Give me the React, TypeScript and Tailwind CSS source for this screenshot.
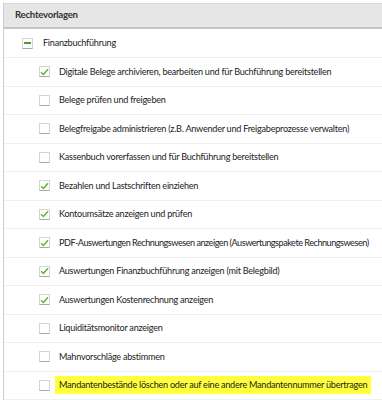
import React from 'react';

const rows: { label: string; checked: boolean; highlight?: boolean; tight?: boolean }[] = [
  { label: 'Digitale Belege archivieren, bearbeiten und für Buchführung bereitstellen', checked: true },
  { label: 'Belege prüfen und freigeben', checked: false },
  { label: 'Belegfreigabe administrieren (z.B. Anwender und Freigabeprozesse verwalten)', checked: false },
  { label: 'Kassenbuch vorerfassen und für Buchführung bereitstellen', checked: false },
  { label: 'Bezahlen und Lastschriften einziehen', checked: true },
  { label: 'Kontoumsätze anzeigen und prüfen', checked: true },
  { label: 'PDF-Auswertungen Rechnungswesen anzeigen (Auswertungspakete Rechnungswesen)', checked: true, tight: true },
  { label: 'Auswertungen Finanzbuchführung anzeigen (mit Belegbild)', checked: true },
  { label: 'Auswertungen Kostenrechnung anzeigen', checked: true },
  { label: 'Liquiditätsmonitor anzeigen', checked: false },
  { label: 'Mahnvorschläge abstimmen', checked: false },
  { label: 'Mandantenbestände löschen oder auf eine andere Mandantennummer übertragen', checked: false, highlight: true },
];

const Box = ({ checked, minus }: { checked?: boolean; minus?: boolean }) => (
  <span className="w-[11px] h-[11px] shrink-0 bg-white border border-[#d4d4d4] border-b-[#a9a9a9] rounded-[1px] flex items-center justify-center">
    {checked && (
      <svg width="9" height="8" viewBox="0 0 9 8">
        <path d="M1 4.2 L3.4 6.4 L8 1.2" fill="none" stroke="#5cb335" strokeWidth="1.4" />
      </svg>
    )}
    {minus && <span className="w-[7px] h-[2px] bg-[#4c9a2a]" />}
  </span>
);

export default function App() {
  return (
    <div className="w-[382px] h-[400px] bg-white overflow-hidden pt-[3px] pl-[3px] text-[9.1px] tracking-[-0.25px] text-[#222]" style={{ fontFamily: 'Lato, sans-serif' }}>
      <div className="border-l border-[#cfcfcf] h-full">
        <div className="h-[26px] bg-[#e6e6e6] border-t border-[#dcdcdc] border-b-2 border-b-[#c4c4c4] flex items-center pl-[11px] font-bold text-[9.6px] text-[#333]">
          Rechtevorlagen
        </div>
        <div className="h-[29px] flex items-center pl-[18px] gap-[10px] border-b border-[#f0f0f0]">
          <Box minus />
          <span>Finanzbuchführung</span>
        </div>
        {rows.map((r) => (
          <div key={r.label} className="h-[28.5px] flex items-center pl-[35px] gap-[9px] border-b border-[#f0f0f0]">
            <Box checked={r.checked} />
            <span
              className={
                r.highlight
                  ? 'bg-[#ffff3b] px-[4px] -ml-[4px] py-[2px] whitespace-nowrap'
                  : r.tight
                  ? 'whitespace-nowrap tracking-[-0.48px]'
                  : 'whitespace-nowrap'
              }
            >
              {r.label}
            </span>
          </div>
        ))}
      </div>
    </div>
  );
}
